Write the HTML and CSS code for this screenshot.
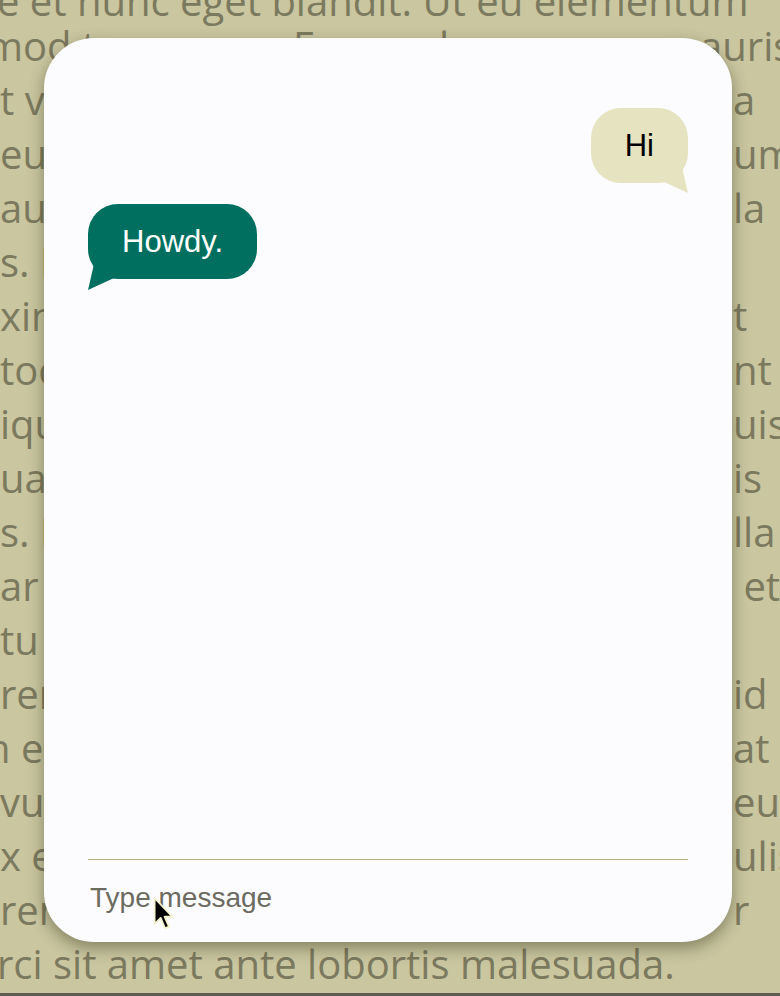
FILE: index.html
```html
<!DOCTYPE html>
<html lang="en">
<head>
<meta charset="utf-8">
<title>Chat</title>
<link rel="stylesheet" href="styles.css">
</head>
<body>
<div class="page">
  <div class="bg-text">
    <div class="full first">e et nunc eget blandit. Ut eu elementum</div>
    <div class="ln wide"><span class="a cut">mod tempor, ac Ea mus lacus ornare</span><span class="b">mauris</span></div>
    <div class="ln"><span class="a">t vitae</span><span class="b">a</span></div>
    <div class="ln"><span class="a">euismod</span><span class="b">um</span></div>
    <div class="ln"><span class="a">auctor</span><span class="b">la</span></div>
    <div class="ln"><span class="a">s. Nam</span><span class="b"></span></div>
    <div class="ln"><span class="a">ximus</span><span class="b">t</span></div>
    <div class="ln"><span class="a">tocu</span><span class="b">nt</span></div>
    <div class="ln"><span class="a">iquam</span><span class="b">uis</span></div>
    <div class="ln"><span class="a">uare</span><span class="b">is</span></div>
    <div class="ln"><span class="a">s. Mauris</span><span class="b">lla</span></div>
    <div class="ln"><span class="a">ar sed</span><span class="b">&nbsp;et</span></div>
    <div class="ln"><span class="a">tu</span><span class="b"></span></div>
    <div class="ln"><span class="a">rend</span><span class="b">id</span></div>
    <div class="ln"><span class="a cut">n et</span><span class="b">at</span></div>
    <div class="ln"><span class="a">vulp</span><span class="b">eu</span></div>
    <div class="ln"><span class="a">x eget</span><span class="b">ulis</span></div>
    <div class="ln"><span class="a">rent</span><span class="b">r</span></div>
    <div class="full">rci sit amet ante lobortis malesuada.</div>
  </div>
  <div class="edge"></div>

  <section class="chat">
    <div class="messages">
      <div class="bubble mine">Hi</div>
      <div class="bubble theirs">Howdy.</div>
    </div>
    <div class="composer">
      <input class="entry" type="text" placeholder="Type message">
    </div>
  </section>

  <svg class="pointer" width="22" height="36" viewBox="0 0 20 32" aria-hidden="true">
    <path d="M1.5 1.5 L1.5 25 L7 19.5 L11 29 L14.5 27.5 L10.5 18.5 L17.5 18.5 Z" fill="#000" stroke="#f4f2cf" stroke-width="1.6" stroke-linejoin="round"/>
  </svg>
</div>
</body>
</html>
```

FILE: styles.css
```css
* { box-sizing: border-box; }

html, body {
  margin: 0;
  padding: 0;
}

body {
  width: 780px;
  height: 996px;
  overflow: hidden;
  background: #c9c6a0;
}

.page {
  position: relative;
  width: 780px;
  height: 996px;
  display: flex;
  flex-direction: column;
  overflow: hidden;
}

.bg-text {
  flex: 1;
  overflow: hidden;
  margin-top: -26px;
  font-family: "Open Sans", sans-serif;
  font-size: 40px;
  line-height: 54px;
  color: #7b795e;
  white-space: nowrap;
}

.full {
  margin-left: -3px;
}

.first {
  margin-bottom: -9px;
}

.ln {
  display: grid;
  grid-template-columns: 733px 1fr;
}

.ln.wide {
  grid-template-columns: 663px 1fr;
}

.a {
  overflow: hidden;
}

.a.cut {
  margin-left: -14px;
}

.b {
  overflow: hidden;
}

.edge {
  height: 3px;
  background: #5d5c52;
}

.chat {
  position: absolute;
  left: 44px;
  top: 38px;
  width: 688px;
  height: 904px;
  background: #fcfcfe;
  border-radius: 50px;
  box-shadow: 0 6px 16px rgba(50, 48, 20, 0.45);
  display: flex;
  flex-direction: column;
  padding: 0 44px;
}

.messages {
  flex: 1;
  display: flex;
  flex-direction: column;
  gap: 21px;
  padding-top: 70px;
}

.bubble {
  position: relative;
  font-family: "Liberation Sans", Arial, sans-serif;
  font-size: 31px;
  line-height: 35px;
  padding: 20px 34px;
  border-radius: 30px;
}

.bubble::after {
  content: "";
  position: absolute;
  bottom: -10px;
  width: 26px;
  height: 26px;
  background: inherit;
}

.mine {
  align-self: flex-end;
  background: #e5e3c0;
  color: #000;
}

.mine::after {
  right: 0;
  clip-path: polygon(0 0, 20px 0, 100% 100%, 0 14px);
}

.theirs {
  align-self: flex-start;
  background: #006f5f;
  color: #fff;
}

.theirs::after {
  left: 0;
  bottom: -11px;
  clip-path: polygon(6px 0, 100% 0, 100% 14px, 0 100%);
}

.composer {
  border-top: 1px solid #b5b38f;
  padding: 21px 0 27px;
}

.entry {
  display: block;
  width: 100%;
  height: 34px;
  border: none;
  outline: none;
  background: transparent;
  padding: 0 2px;
  font-family: "Liberation Sans", Arial, sans-serif;
  font-size: 28px;
  line-height: 34px;
  color: #333;
}

.entry::placeholder {
  color: #6c6b60;
  opacity: 1;
}

.pointer {
  position: absolute;
  left: 153px;
  top: 896px;
}
```
